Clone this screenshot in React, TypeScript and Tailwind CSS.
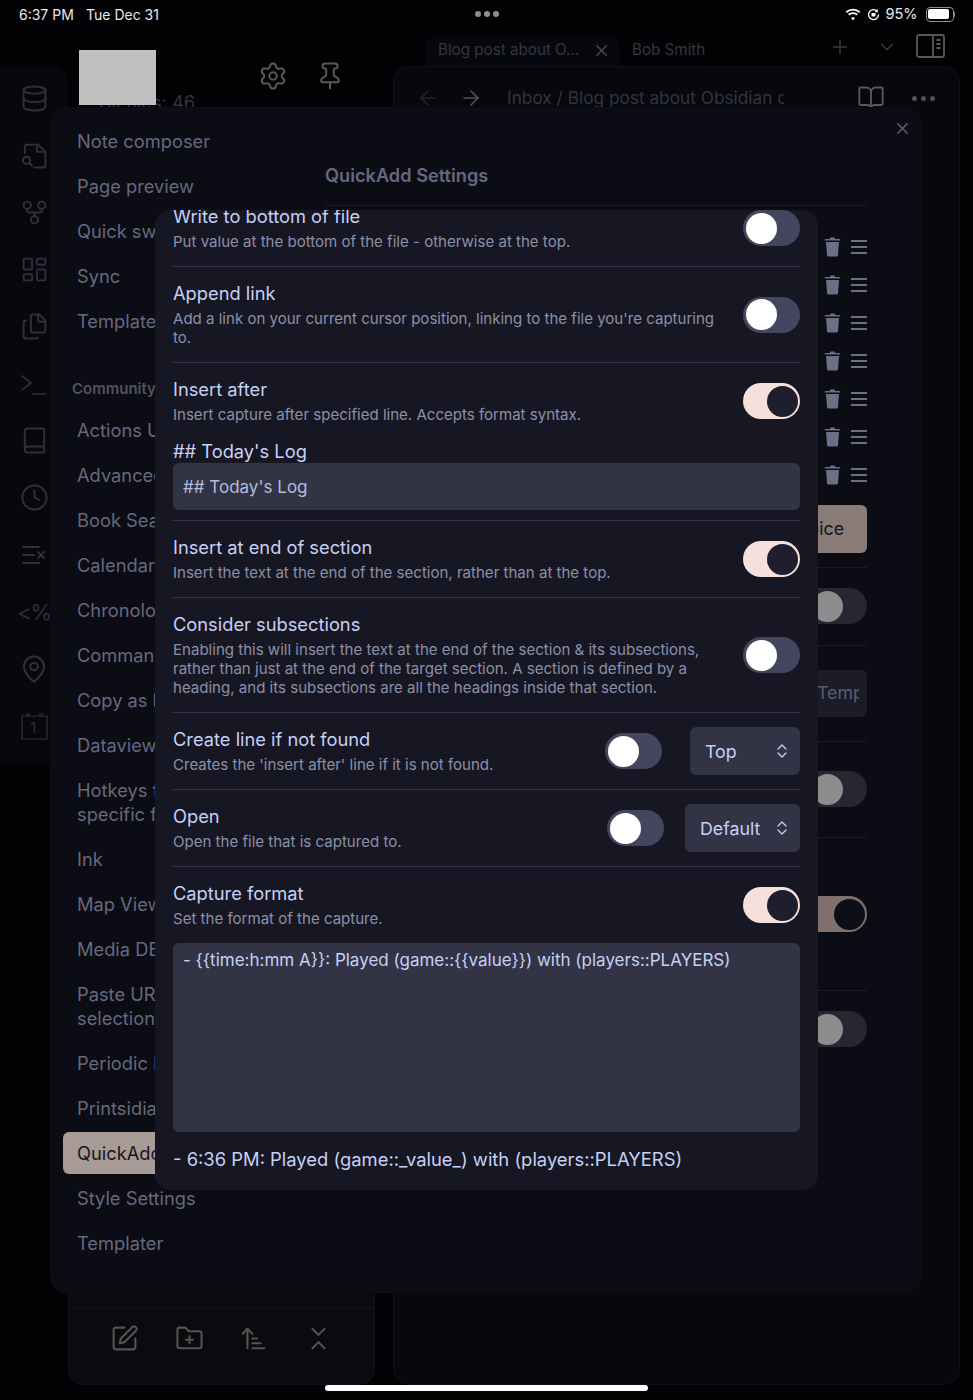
import React from 'react';
import {
  ArrowLeft,
  ArrowRight,
  ArrowUpNarrowWide,
  Book,
  BookOpen,
  ChevronDown,
  ChevronsDownUp,
  Clock,
  Database,
  Files,
  FolderPlus,
  GitFork,
  LayoutDashboard,
  MapPin,
  Pin,
  Plus,
  Settings,
  SquarePen,
  X,
} from 'lucide-react';

const navTop = ['Note composer', 'Page preview', 'Quick switcher', 'Sync', 'Templates'];
const navCommunity = [
  'Actions URI',
  'Advanced Tables',
  'Book Search',
  'Calendar',
  'Chronology',
  'Commander',
  'Copy as HTML',
  'Dataview',
  'Hotkeys for\nspecific files',
  'Ink',
  'Map View',
  'Media DB',
  'Paste URL into\nselection',
  'Periodic Notes',
  'Printsidian',
];

const Toggle = ({ on = false }: { on?: boolean }) => (
  <div
    className={`flex h-[36px] w-[57px] shrink-0 items-center rounded-full px-[2.500px] ${
      on ? 'justify-end bg-[#f5e0dc]' : 'justify-start bg-[#43465e]'
    }`}
  >
    <div className={`h-[31px] w-[31px] rounded-full ${on ? 'bg-[#1e1e2e]' : 'bg-white'}`} />
  </div>
);

const DimToggle = ({ on = false }: { on?: boolean }) => (
  <div
    className={`flex h-[36px] w-[50px] items-center justify-end rounded-r-full ${
      on ? 'bg-[#7f706c] pr-[2.500px]' : 'bg-[#262731] pr-[24px]'
    }`}
  >
    <div className={`h-[31px] w-[31px] shrink-0 rounded-full ${on ? 'bg-[#0e0e17]' : 'bg-[#8d8d8d]'}`} />
  </div>
);

const Info = ({ title, desc }: { title: string; desc: React.ReactNode }) => (
  <div className="min-w-0 flex-1">
    <div className="text-[18.300px] leading-[22px] text-[#c6d0f5]">{title}</div>
    <div className="mt-[5px] text-[15.050px] leading-[19px] text-[#8b8fa8]">{desc}</div>
  </div>
);

const Select = ({ value, width }: { value: string; width: string }) => (
  <div className={`-my-[1px] flex h-[48px] items-center justify-between rounded-md bg-[#323445] pl-[15px] pr-[12px] text-[17.800px] text-[#c6d0f5] ${width}`}>
    <span className="pt-[2px]">{value}</span>
    <svg width="12" height="16" viewBox="0 0 12 16" fill="none" stroke="#c6d0f5" strokeWidth="1.300" strokeLinecap="round" strokeLinejoin="round">
      <path d="M2 6l4-4 4 4M2 10l4 4 4-4" />
    </svg>
  </div>
);

const Row = ({
  title,
  desc,
  on,
  gap = 'gap-[28px]',
  children,
}: {
  title: string;
  desc: React.ReactNode;
  on?: boolean;
  gap?: string;
  children?: React.ReactNode;
}) => (
  <div className="flex items-center gap-[26px] border-b border-[#33344a] py-[15px]">
    <Info title={title} desc={desc} />
    <div className={`flex items-center ${gap}`}>
      <Toggle on={on} />
      {children}
    </div>
  </div>
);

const Trash = () => (
  <svg width="17" height="20" viewBox="0 0 17 20" fill="#6c7086">
    <path d="M6 1.500c0-.6.4-1 1-1h3c.6 0 1 .4 1 1V2h4.500c.5 0 .9.4.9.8s-.4.7-.9.7h-14c-.5 0-.9-.3-.9-.7s.4-.8.9-.8H6v-.5z" />
    <path d="M2 5h13l-1 13c-.1 1-.8 1.600-1.700 1.600H4.700C3.800 19.600 3.100 19 3 18L2 5z" />
  </svg>
);

const Hamburger = () => (
  <div className="flex w-[16px] flex-col gap-[4px]">
    <div className="h-[2.300px] bg-[#6c7086]" />
    <div className="h-[2.300px] bg-[#6c7086]" />
    <div className="h-[2.300px] bg-[#6c7086]" />
  </div>
);

const Ribbon = () => (
  <div className="mt-[37px] flex h-[698px] w-[68px] shrink-0 flex-col items-center rounded-tr-2xl bg-[#07080d] pt-[5px] text-[#2f303b]">
    <div className="flex h-[57px] items-center"><Database size={29} strokeWidth={1.6} /></div>
    <div className="flex h-[57px] items-center">
      <svg width="29" height="29" viewBox="0 0 24 24" fill="none" stroke="currentColor" strokeWidth="1.600" strokeLinecap="round" strokeLinejoin="round">
        <path d="M4 10V5a2 2 0 0 1 2-2h9l6 6v11a2 2 0 0 1-2 2h-7" />
        <path d="M14 3v6h7" />
        <circle cx="5.500" cy="16" r="3" />
        <path d="M7.700 18.200L10 20.500" />
      </svg>
    </div>
    <div className="flex h-[57px] items-center"><GitFork size={29} strokeWidth={1.6} /></div>
    <div className="flex h-[57px] items-center"><LayoutDashboard size={29} strokeWidth={1.6} /></div>
    <div className="flex h-[57px] items-center"><Files size={29} strokeWidth={1.6} /></div>
    <div className="flex h-[57px] items-center">
      <svg width="28" height="24" viewBox="0 0 28 24" fill="none" stroke="currentColor" strokeWidth="1.600" strokeLinecap="round" strokeLinejoin="round">
        <path d="M2 4l9 7-9 7M13 22h13" />
      </svg>
    </div>
    <div className="flex h-[57px] items-center"><Book size={29} strokeWidth={1.6} /></div>
    <div className="flex h-[57px] items-center"><Clock size={29} strokeWidth={1.6} /></div>
    <div className="flex h-[57px] items-center">
      <svg width="24" height="20" viewBox="0 0 24 20" fill="none" stroke="currentColor" strokeWidth="1.800" strokeLinecap="round">
        <path d="M1 2h16M1 10h11M1 18h16M16 7l6 6M22 7l-6 6" />
      </svg>
    </div>
    <div className="flex h-[57px] items-center text-[22px] leading-none tracking-[-1px]">&lt;%</div>
    <div className="flex h-[57px] items-center"><MapPin size={30} strokeWidth={1.6} /></div>
    <div className="relative flex h-[57px] items-center">
      <svg width="27" height="28" viewBox="0 0 27 28" fill="none" stroke="currentColor" strokeWidth="1.200">
        <path d="M1 4h25v23H1zM1 4h5M8 4h11M21 4h5" />
        <circle cx="7" cy="3" r="1.500" />
        <circle cx="20" cy="3" r="1.500" />
      </svg>
      <span className="absolute left-[10px] top-[24px] text-[14px] leading-none">1</span>
    </div>
  </div>
);

const Sidebar = () => (
  <div className="relative flex w-[307px] shrink-0 flex-col">
    <div className="h-[38px]" />
    <div className="flex h-[20px] items-center gap-[27px] pl-[190px] text-[#5f5754]">
      <Settings size={30} strokeWidth={1.6} />
      <Pin size={30} strokeWidth={1.6} />
    </div>
    <div className="mt-[5px] pl-[31px] text-[18.300px] leading-[22px] text-[#33343f]">All files: 46</div>
    <div className="flex-1 rounded-b-2xl border-x border-b border-[#111219] bg-[#0a0a10]">
      <div className="h-[1195px]" />
      <div className="flex h-[76px] items-center gap-[35.500px] border-t border-[#14141c] pb-[17px] pl-[41px] text-[#5a524f]">
        <SquarePen size={29} strokeWidth={1.7} />
        <FolderPlus size={29} strokeWidth={1.7} />
        <ArrowUpNarrowWide size={29} strokeWidth={1.7} />
        <ChevronsDownUp size={29} strokeWidth={1.7} />
      </div>
    </div>
    {/* Redacted block over the vault name */}
    <div className="absolute left-[11px] top-[22px] h-[55px] w-[77px] bg-[#c0c0c0]" />
  </div>
);

const MainPane = () => (
  <div className="ml-[18px] flex w-[567px] shrink-0 flex-col">
    <div className="flex h-[38px] items-end pl-[32px] text-[15.200px] text-[#34353f]">
      <div className="flex h-[30px] w-[195px] items-center justify-between rounded-t-xl bg-[#07080d] pb-[2px] pl-[13px] pr-[9px]">
        <span>Blog post about O...</span>
        <X size={19} strokeWidth={1.7} className="text-[#4a4b55]" />
      </div>
      <div className="ml-[12px] flex h-[30px] items-center pb-[2px]">Bob Smith</div>
      <div className="ml-auto flex h-[38px] items-center pr-[15px] text-[#3e3a39]">
        <Plus size={22} strokeWidth={1.6} />
        <ChevronDown size={22} strokeWidth={1.6} className="ml-[25px]" />
        <svg width="29" height="24" viewBox="0 0 29 24" fill="none" stroke="#5f5754" strokeWidth="1.800" className="mb-[3px] ml-[18px]">
          <rect x="1" y="1" width="27" height="22" rx="2" />
          <path d="M17 1v22M20.500 6h4M20.500 10h4M20.500 14h4" />
        </svg>
      </div>
    </div>
    <div className="flex h-[1319px] items-start rounded-2xl border border-[#101119] bg-[#07080d] pt-[17px]">
      <div className="flex h-[28px] w-full items-center pl-[22px] pr-[24px] text-[#33343f]">
        <ArrowLeft size={24} strokeWidth={1.6} className="text-[#23242c]" />
        <ArrowRight size={24} strokeWidth={1.6} className="ml-[19px] text-[#55504e]" />
        <div className="ml-[24px] w-[277px] overflow-hidden whitespace-nowrap text-[17.250px]">Inbox / Blog post about Obsidian community</div>
        <BookOpen size={28} strokeWidth={1.6} className="ml-auto text-[#5f5754]" />
        <div className="ml-[27px] flex gap-[4px]">
          <div className="h-[5px] w-[5px] rounded-full bg-[#55504e]" />
          <div className="h-[5px] w-[5px] rounded-full bg-[#55504e]" />
          <div className="h-[5px] w-[5px] rounded-full bg-[#55504e]" />
        </div>
      </div>
    </div>
  </div>
);

const SettingsNav = () => (
  <div className="w-[245px] shrink-0 pl-[13px] pt-[11.500px] text-[18.300px] leading-[24px] text-[#666880]">
    {navTop.map((n) => (
      <div key={n} className="px-[14px] py-[10.500px]">{n}</div>
    ))}
    <div className="flex h-[64px] items-end px-[9px] pb-[11px] text-[15px] font-semibold leading-[17px] text-[#50525f]">Community plugins</div>
    {navCommunity.map((n) => (
      <div key={n} className="whitespace-pre-line px-[14px] py-[10.500px]">{n}</div>
    ))}
    <div className="my-[1.500px] rounded-md bg-[#a89a94] px-[14px] py-[9px] text-[#15151f]">QuickAdd</div>
    <div className="px-[14px] py-[10.500px]">Style Settings</div>
    <div className="px-[14px] py-[10.500px]">Templater</div>
  </div>
);

const SettingsPane = () => (
  <div className="ml-[30px] flex w-[542px] flex-col">
    <div className="mt-[53px] h-[46px] border-b border-[#1b1c26] text-[18.200px] font-semibold leading-[30px] text-[#666880]">QuickAdd Settings</div>
    <div className="mt-[31px] flex flex-col items-end gap-[18px]">
      {[0, 1, 2, 3, 4, 5, 6].map((i) => (
        <div key={i} className="flex h-[20px] items-center gap-[10px]">
          <Trash />
          <Hamburger />
        </div>
      ))}
    </div>
    <div className="mt-[20px] flex h-[48px] items-center justify-end self-end rounded-md bg-[#8a7b76] px-[23px] text-[17.800px] text-[#15151f]">Add Choice</div>
    <div className="mt-[14px] border-b border-[#1b1c26]" />
    <div className="mt-[20px] self-end"><DimToggle /></div>
    <div className="mt-[21px] border-b border-[#1b1c26]" />
    <div className="mt-[24px] flex h-[47px] w-[150px] items-center justify-end self-end rounded-md bg-[#1b1c26] pr-[8px] text-[17.800px] text-[#5a5c70]">
      <div className="w-[42px] overflow-hidden whitespace-nowrap">Template</div>
    </div>
    <div className="mt-[24px] border-b border-[#1b1c26]" />
    <div className="mt-[29px] self-end"><DimToggle /></div>
    <div className="mt-[30px] border-b border-[#1b1c26]" />
    <div className="mt-[58px] self-end"><DimToggle on /></div>
    <div className="mt-[58px] border-b border-[#1b1c26]" />
    <div className="mt-[20px] self-end"><DimToggle /></div>
  </div>
);

const QuickAddModal = () => (
  <div className="absolute left-[155px] top-[210px] h-[980px] w-[663px] overflow-hidden rounded-2xl bg-[#171724] px-[18px]">
    <div className="-mt-[20px]">
      <Row title="Write to bottom of file" desc="Put value at the bottom of the file - otherwise at the top." />
      <Row
        title="Append link"
        desc="Add a link on your current cursor position, linking to the file you're capturing to."
      />
      <div className="border-b border-[#33344a] pb-[10px] pt-[15px]">
        <div className="flex items-center gap-[26px]">
          <Info title="Insert after" desc="Insert capture after specified line. Accepts format syntax." />
          <Toggle on />
        </div>
        <div className="mt-[15px] text-[18.300px] leading-[24px] text-[#c6d0f5]">## Today's Log</div>
        <div className="flex h-[47px] items-center rounded-md bg-[#323445] px-[10px] pt-[3px] text-[17px] text-[#b4bcdc]">## Today's Log</div>
      </div>
      <Row title="Insert at end of section" desc="Insert the text at the end of the section, rather than at the top." on />
      <Row
        title="Consider subsections"
        desc="Enabling this will insert the text at the end of the section & its subsections, rather than just at the end of the target section. A section is defined by a heading, and its subsections are all the headings inside that section."
      />
      <Row title="Create line if not found" desc="Creates the 'insert after' line if it is not found.">
        <Select value="Top" width="w-[110px]" />
      </Row>
      <Row title="Open" desc="Open the file that is captured to." gap="gap-[21px]">
        <Select value="Default" width="w-[115px]" />
      </Row>
      <div className="flex items-center gap-[26px] py-[15px]">
        <Info title="Capture format" desc="Set the format of the capture." />
        <Toggle on />
      </div>
      <div className="h-[189px] rounded-md bg-[#323445] px-[10px] pb-[5px] pt-[6px] text-[17px] leading-[22px] text-[#c6d0f5]">
        {'- {{time:h:mm A}}: Played (game::{{value}}) with (players::PLAYERS)'}
      </div>
      <div className="pt-[15px] text-[18.400px] leading-[24px] text-[#c6d0f5]">- 6:36 PM: Played (game::_value_) with (players::PLAYERS)</div>
    </div>
  </div>
);

const StatusBar = () => (
  <div className="flex h-[28px] items-center px-[18px] text-[14px] text-[#e8e8ec]">
    <div className="flex flex-1">
      <span className="ml-[1px] w-[67px]">6:37 PM</span>
      <span>Tue Dec 31</span>
    </div>
    <div className="flex gap-[3px]">
      <div className="h-[6px] w-[6px] rounded-full bg-[#8d8d93]" />
      <div className="h-[6px] w-[6px] rounded-full bg-[#8d8d93]" />
      <div className="h-[6px] w-[6px] rounded-full bg-[#8d8d93]" />
    </div>
    <div className="flex flex-1 items-center justify-end">
      <svg width="16" height="13" viewBox="0 0 16 13" fill="white">
        <path d="M8 2.500c2.400 0 4.500.9 6.100 2.400l1.200-1.300A10.600 10.600 0 0 0 8 .7 10.600 10.600 0 0 0 .7 3.600l1.200 1.300A8.800 8.800 0 0 1 8 2.500z" />
        <path d="M8 6c1.400 0 2.700.6 3.700 1.400l1.200-1.300A7.200 7.200 0 0 0 8 4.200c-1.900 0-3.600.7-4.900 1.900l1.200 1.300C5.300 6.600 6.600 6 8 6z" />
        <path d="M8 9.200c-.8 0-1.500.3-2 .8l2 2.300 2-2.300c-.5-.5-1.200-.8-2-.8z" />
      </svg>
      <svg width="13" height="13" viewBox="0 0 13 13" fill="none" stroke="white" strokeWidth="1.300" className="ml-[6px]">
        <path d="M11.500 6.500a5 5 0 1 1-1.500-3.500" />
        <path d="M10.200 1.500v2h-2" />
        <rect x="4.500" y="5" width="4" height="3.500" rx=".5" fill="white" stroke="none" />
      </svg>
      <span className="ml-[5px] text-[14.500px]">95%</span>
      <div className="ml-[8px] flex items-center">
        <div className="h-[15px] w-[28px] rounded-[4px] border border-[#8d8d93] p-[1.500px]">
          <div className="h-full w-[92%] rounded-[2px] bg-white" />
        </div>
        <div className="h-[5px] w-[1.500px] rounded-r bg-[#8d8d93]" />
      </div>
    </div>
  </div>
);

export default function App() {
  return (
    <div className="relative h-[1400px] w-[973px] overflow-hidden bg-[#020205] font-['Inter',sans-serif]">
      <StatusBar />
      <div className="flex h-[1357px]">
        <Ribbon />
        <Sidebar />
        <MainPane />
      </div>

      {/* Settings modal */}
      <div className="absolute left-[50px] top-[107px] flex h-[1186px] w-[872px] rounded-2xl bg-[#0c0c14]">
        <SettingsNav />
        <SettingsPane />
        <X size={19} strokeWidth={1.5} className="absolute right-[10px] top-[12px] text-[#666880]" />
      </div>

      <QuickAddModal />

      {/* Home indicator */}
      <div className="absolute bottom-[9px] left-[325px] h-[6px] w-[323px] rounded-full bg-white" />
    </div>
  );
}
